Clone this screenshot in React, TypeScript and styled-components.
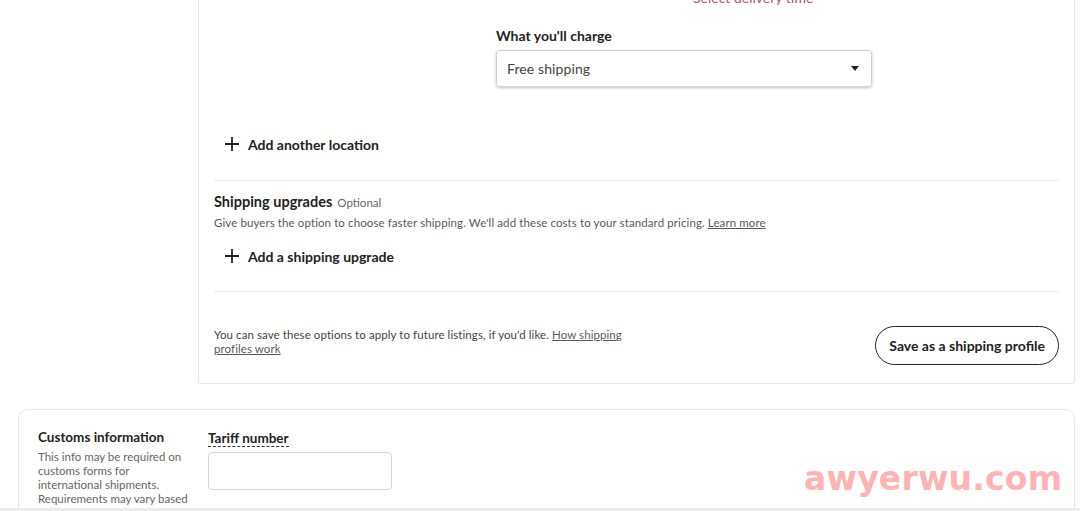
import React, { FC } from 'react';
import styled, { createGlobalStyle } from 'styled-components';

const GlobalStyle = createGlobalStyle`
  html, body {
    margin: 0;
    padding: 0;
    background: #fff;
  }
  body {
    font-family: Lato, "Open Sans", Arial, sans-serif;
    color: #222;
  }
`;

const Page = styled.div`
  position: relative;
  height: 508px;
  overflow: hidden;
  border-bottom: 3px solid #ececec;
  box-sizing: content-box;
`;

const Stack = styled.div`
  display: flex;
  flex-direction: column;
  margin-top: -20px;
`;

const ShippingCard = styled.section`
  margin-left: 198px;
  width: 877px;
  box-sizing: border-box;
  border: 1px solid #e6e6e6;
  border-top: none;
  border-radius: 0 0 4px 4px;
  padding: 0 15px 0 15px;
`;

const ChargeBlock = styled.div`
  display: flex;
  flex-direction: column;
  margin-left: 282px;
  padding-top: 9px;
`;

const ErrorText = styled.div`
  margin-left: 197px;
  font-size: 14px;
  line-height: 18px;
  color: #c0506c;
`;

const Label = styled.div`
  margin-top: 20px;
  font-size: 14px;
  font-weight: 700;
  line-height: 18px;
  color: #222;
`;

const Select = styled.div`
  margin-top: 5px;
  width: 376px;
  height: 37px;
  box-sizing: border-box;
  display: flex;
  align-items: center;
  justify-content: space-between;
  padding: 0 12px 0 10px;
  border: 1px solid #cfcfcf;
  border-radius: 4px;
  box-shadow: 0 1px 3px rgba(0, 0, 0, 0.25);
  font-size: 14px;
  letter-spacing: 0.1px;
  color: #444;
`;

const Caret = styled.span`
  width: 0;
  height: 0;
  border-left: 4px solid transparent;
  border-right: 4px solid transparent;
  border-top: 5px solid #222;
`;

const AddButton = styled.div<{ $top: number }>`
  display: flex;
  align-items: center;
  gap: 8px;
  height: 36px;
  margin-top: ${(p) => p.$top}px;
  padding-left: 10px;
  font-size: 14px;
  font-weight: 700;
  color: #222;
`;

const Rule = styled.hr<{ $top: number }>`
  margin: ${(p) => p.$top}px 0 0 0;
  border: none;
  border-top: 1px solid #ebebeb;
`;

const SectionTitle = styled.div`
  margin-top: 11px;
  display: flex;
  align-items: baseline;
  gap: 5px;
  font-size: 14.5px;
  font-weight: 700;
  line-height: 20px;
  color: #222;
`;

const Optional = styled.span`
  font-size: 11.5px;
  font-weight: 400;
  color: #666;
`;

const Hint = styled.p`
  margin: 2px 0 0 0;
  font-size: 11.5px;
  line-height: 16px;
  letter-spacing: 0.1px;
  color: #595959;
`;

const TextLink = styled.a`
  color: #595959;
  text-decoration: underline;
`;

const FooterRow = styled.div`
  display: flex;
  justify-content: space-between;
  align-items: flex-start;
  padding: 34px 0 18px 0;
`;

const FooterText = styled.p`
  margin: 2px 0 0 0;
  width: 420px;
  font-size: 11.5px;
  line-height: 14px;
  letter-spacing: 0.08px;
  color: #444;
`;

const PillButton = styled.button`
  height: 39px;
  padding: 0 13px;
  border: 1.5px solid #222;
  border-radius: 20px;
  background: #fff;
  font-family: inherit;
  font-size: 14px;
  font-weight: 700;
  color: #222;
`;

const CustomsCard = styled.section`
  margin: 25px 0 0 18px;
  width: 1057px;
  height: 140px;
  box-sizing: border-box;
  border: 1px solid #e6e6e6;
  border-radius: 10px;
  padding: 19px 19px;
  display: flex;
  gap: 14px;
`;

const CustomsIntro = styled.div`
  width: 156px;
`;

const CustomsTitle = styled.div`
  font-size: 13.5px;
  font-weight: 700;
  line-height: 16px;
  color: #222;
`;

const CustomsHint = styled.p`
  margin: 5px 0 0 0;
  font-size: 11.5px;
  line-height: 14px;
  color: #666;
`;

const Field = styled.div`
  display: flex;
  flex-direction: column;
  padding-top: 1px;
`;

const DashedLabel = styled.span`
  align-self: flex-start;
  font-size: 13.5px;
  font-weight: 700;
  line-height: 16px;
  color: #222;
  border-bottom: 1.5px dashed #333;
`;

const TextInput = styled.div`
  margin-top: 5px;
  width: 184px;
  height: 38px;
  box-sizing: border-box;
  border: 1px solid #d6d6d6;
  border-radius: 4px;
`;

const Watermark = styled.div`
  position: absolute;
  left: 804px;
  top: 459px;
  font-family: "DejaVu Sans", sans-serif;
  font-size: 33px;
  font-weight: 700;
  letter-spacing: 0.2px;
  color: #ffb3b3;
  pointer-events: none;
`;

const PlusIcon: FC = () => (
  <svg width="16" height="16" viewBox="0 0 16 16" fill="none">
    <path d="M8 1v14M1 8h14" stroke="#222" strokeWidth="1.8" />
  </svg>
);

const App: FC = () => (
  <Page>
    <GlobalStyle />
    <Stack>
      <ShippingCard>
        <ChargeBlock>
          <ErrorText>Select delivery time</ErrorText>
          <Label>What you'll charge</Label>
          <Select>
            <span>Free shipping</span>
            <Caret />
          </Select>
        </ChargeBlock>
        <AddButton $top={39}>
          <PlusIcon />
          Add another location
        </AddButton>
        <Rule $top={18} />
        <SectionTitle>
          Shipping upgrades <Optional>Optional</Optional>
        </SectionTitle>
        <Hint>
          Give buyers the option to choose faster shipping. We'll add these costs to your standard pricing.{' '}
          <TextLink>Learn more</TextLink>
        </Hint>
        <AddButton $top={7}>
          <PlusIcon />
          Add a shipping upgrade
        </AddButton>
        <Rule $top={17} />
        <FooterRow>
          <FooterText>
            You can save these options to apply to future listings, if you'd like.{' '}
            <TextLink>How shipping profiles work</TextLink>
          </FooterText>
          <PillButton>Save as a shipping profile</PillButton>
        </FooterRow>
      </ShippingCard>
      <CustomsCard>
        <CustomsIntro>
          <CustomsTitle>Customs information</CustomsTitle>
          <CustomsHint>
            This info may be required on customs forms for international shipments. Requirements may vary based
            on destination.
          </CustomsHint>
        </CustomsIntro>
        <Field>
          <DashedLabel>Tariff number</DashedLabel>
          <TextInput />
        </Field>
      </CustomsCard>
    </Stack>
    <Watermark>awyerwu.com</Watermark>
  </Page>
);

export default App;
